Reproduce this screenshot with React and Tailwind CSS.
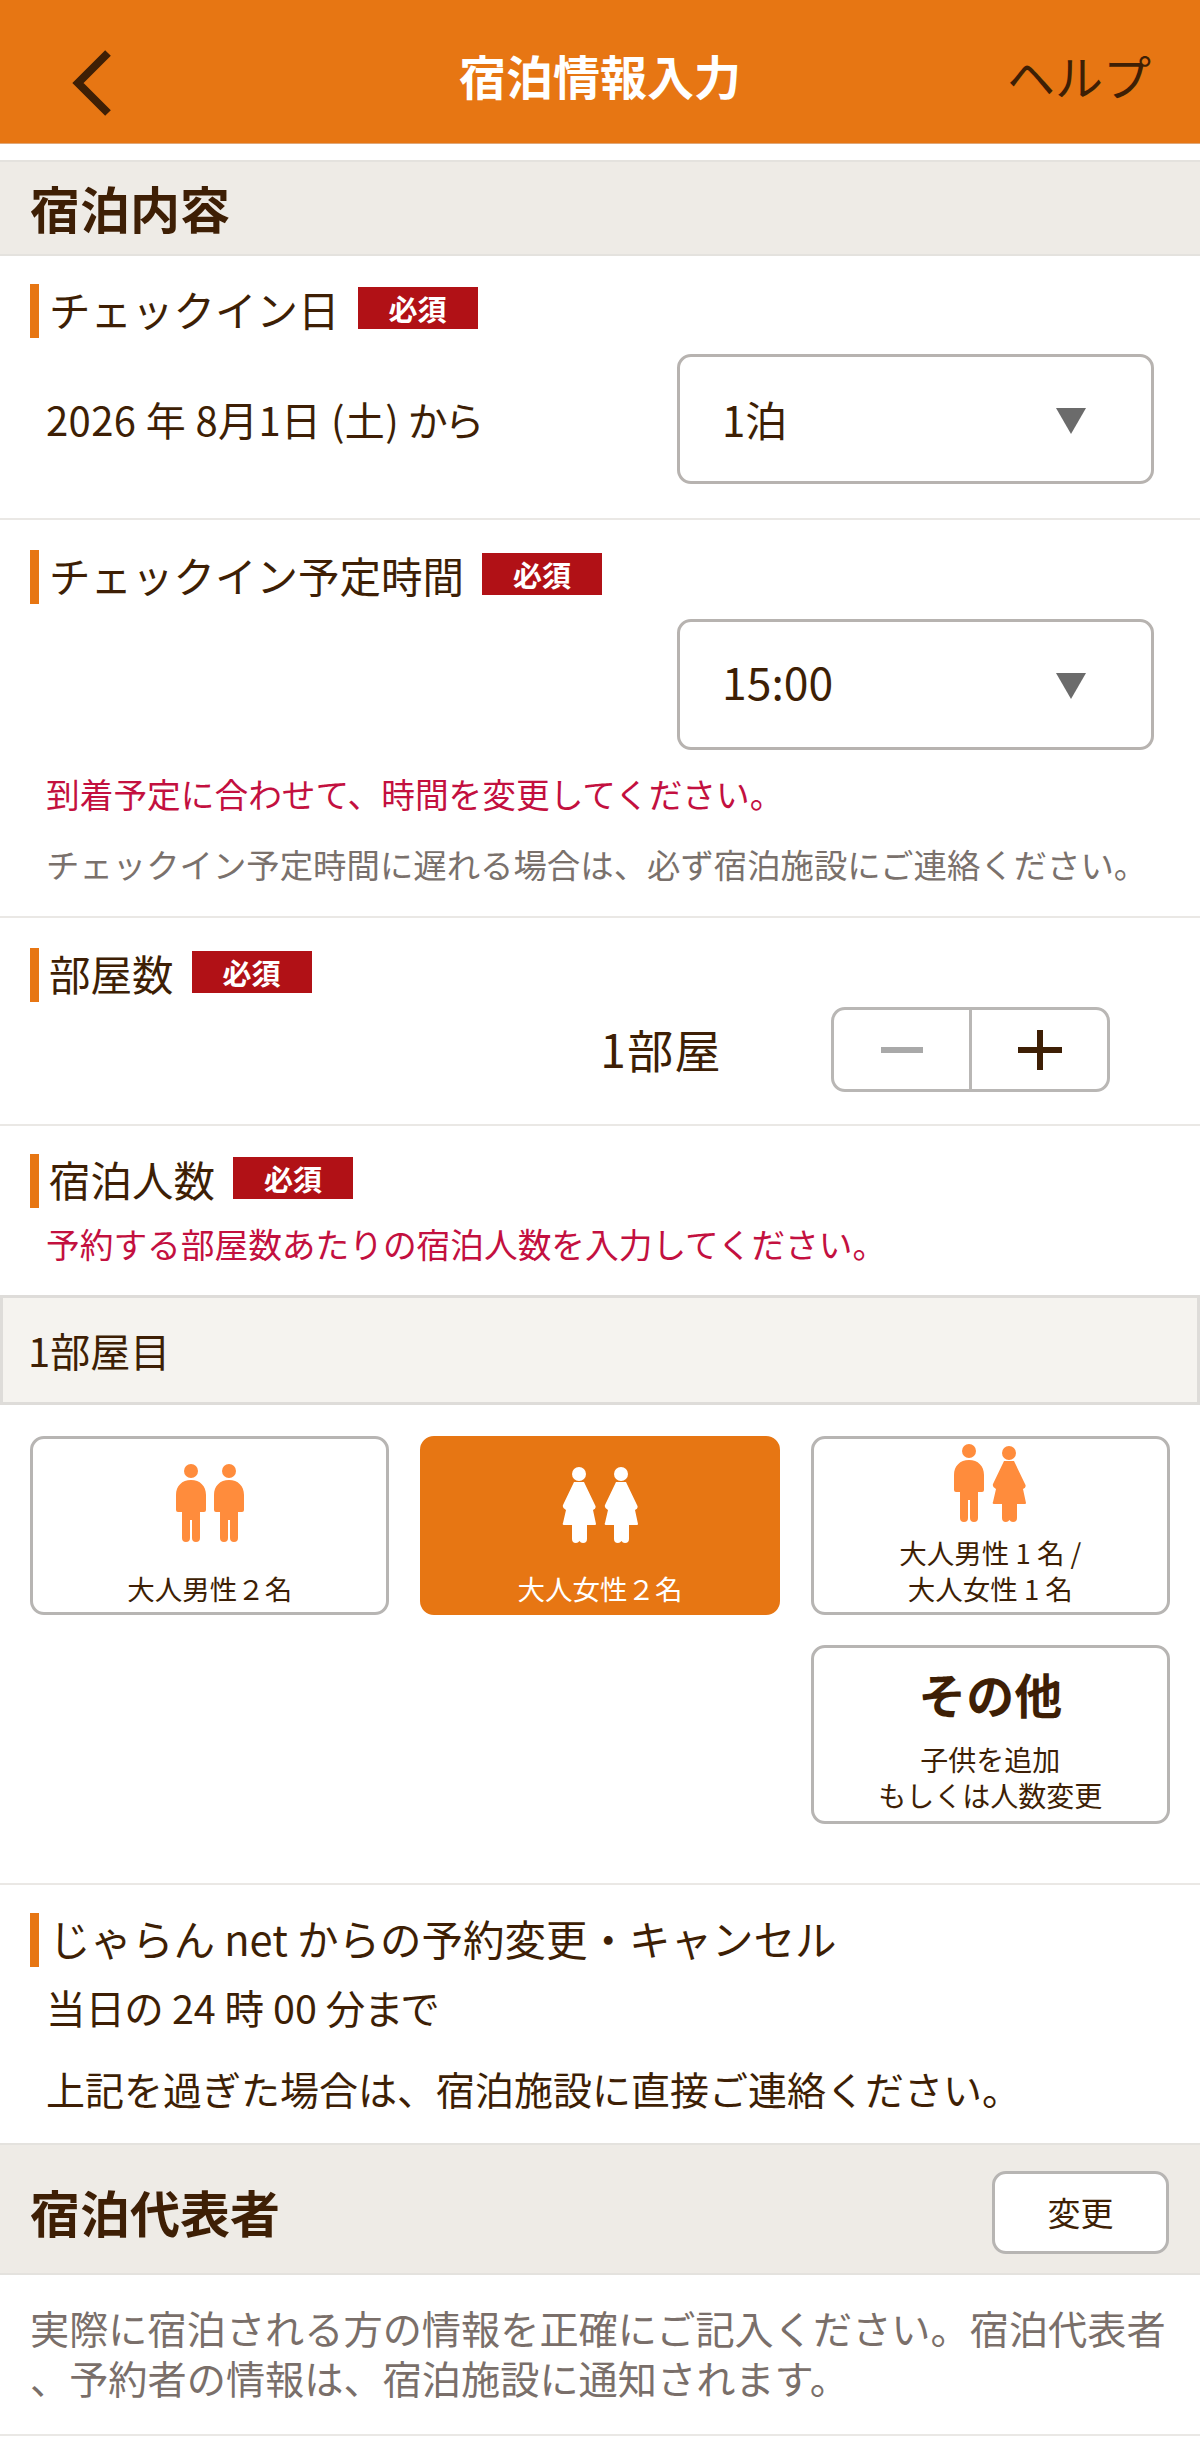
import React from "react";

const Bar = () => <span className="w-[9px] self-stretch bg-[#E77613] shrink-0" />;

function Badge() {
  return (
    <span className="ml-[18px] w-[120px] h-[42px] mt-[-6px] bg-[#B11116] text-white text-[29px] font-bold flex items-center justify-center leading-none">
      必須
    </span>
  );
}

function Label({ children, badge = true, className = "" }) {
  return (
    <div className={`flex items-center h-[54px] ml-[30px] ${className}`}>
      <Bar />
      <span className="ml-[10px] mt-[-2px] text-[41.500px] leading-none whitespace-nowrap">{children}</span>
      {badge && <Badge />}
    </div>
  );
}

function Select({ value, className = "", textClass = "" }) {
  return (
    <div className={`w-[477px] border-[3px] border-[#B7B3B0] rounded-[14px] flex items-center justify-between pl-[42px] pr-[65px] ${className}`}>
      <span className={`leading-none ${textClass}`}>{value}</span>
      <svg className="mt-[3px]" width="30" height="26" viewBox="0 0 30 26"><polygon points="0,0 30,0 15,26" fill="#6B6B6B" /></svg>
    </div>
  );
}

function SectionHead({ title, action, className = "", titleClass = "" }) {
  return (
    <div className={`bg-[#EEEBE6] border-y-2 border-[#E4E2DE] flex items-center justify-between pl-[30px] pr-[31px] ${className}`}>
      <h2 className={`text-[50px] font-bold leading-none [font-feature-settings:'palt'] ${titleClass}`}>{title}</h2>
      {action}
    </div>
  );
}

function Man({ fill }) {
  return (
    <svg width="30" height="78" viewBox="0 0 30 78" fill={fill}>
      <circle cx="15" cy="7" r="7" />
      <path d="M15 16C24 16 30 22 30 31V46Q30 48 28 48H24V74Q24 78 20 78Q16 78 16 74V56H14V74Q14 78 10 78Q6 78 6 74V48H2Q0 48 0 46V31C0 22 6 16 15 16Z" />
    </svg>
  );
}

function Woman({ fill }) {
  return (
    <svg width="34" height="76" viewBox="0 0 34 76" fill={fill}>
      <circle cx="17" cy="7" r="7" />
      <path d="M12 15H22L33 38Q35 41 31 43L34 57Q34 58 33 58H25V72Q25 76 21 76Q18.500 76 17.500 74Q16 76 14 76Q10 76 10 72V58H2Q0 58 1 56L4 43Q0 41 1 38Z" />
    </svg>
  );
}

function Choice({ active, label, figures, pt }) {
  const color = active ? "#FFFFFF" : "#FF8C3C";
  return (
    <div className={`h-[179px] rounded-[14px] border-[3px] flex flex-col items-center pb-[6px] ${active ? "bg-[#E77613] border-[#E77613] text-white" : "bg-white border-[#B7B5B3]"} ${pt}`}>
      <div className="flex gap-[8px] items-end h-[78px] shrink-0">
        {figures.map((f, i) => (f === "m" ? <Man key={i} fill={color} /> : <Woman key={i} fill={color} />))}
      </div>
      <div className="mt-auto text-[27.500px] leading-[36px] text-center">{label}</div>
    </div>
  );
}

export default function App() {
  return (
    <div className="w-full h-[2453px] overflow-hidden bg-white text-[#3E1F05] font-['Noto_Sans_CJK_JP','Noto_Sans_CJK_SC','Liberation_Sans',sans-serif]">
      <header className="h-[144px] bg-[#E77613] border-b border-[#E0A878] grid grid-cols-[1fr_auto_1fr] items-center">
        <div className="pl-[72px]">
          <svg width="40" height="66" viewBox="0 0 40 66" fill="none" className="mt-[22px]">
            <path d="M36 3L6 33L36 63" stroke="#3E1F05" strokeWidth="8" strokeLinejoin="miter" />
          </svg>
        </div>
        <h1 className="text-[47px] font-bold text-white leading-none [font-feature-settings:'palt'] mt-[6px]">宿泊情報入力</h1>
        <div className="text-right pr-[49px] text-[48px] leading-none mt-[6px]">ヘルプ</div>
      </header>

      <SectionHead title="宿泊内容" className="mt-[16px] h-[96px]" titleClass="mt-[-2px]" />

      <section className="h-[264px] border-b-2 border-[#EAE8E5] pt-[28px]">
        <Label>チェックイン日</Label>
        <div className="flex items-center justify-between pl-[46px] pr-[46px] mt-[16px]">
          <span className="text-[40px] leading-none tracking-[0.01em] [font-feature-settings:'palt'] whitespace-nowrap">2026 年 8月1日 (土) から</span>
          <Select value="1泊" className="h-[130px]" textClass="text-[42px]" />
        </div>
      </section>

      <section className="h-[398px] border-b-2 border-[#EAE8E5] pt-[30px]">
        <Label>チェックイン予定時間</Label>
        <div className="flex justify-end pr-[46px] mt-[15px]">
          <Select value="15:00" className="h-[131px]" textClass="text-[44.500px] mt-[-6px]" />
        </div>
        <p className="ml-[46px] mt-[24px] text-[33.700px] leading-[40px] text-[#C3103F] whitespace-nowrap">到着予定に合わせて、時間を変更してください。</p>
        <p className="ml-[46px] mt-[30px] text-[33.400px] leading-[40px] text-[#7A716C] whitespace-nowrap">チェックイン予定時間に遅れる場合は、必ず宿泊施設にご連絡ください。</p>
      </section>

      <section className="h-[208px] border-b-2 border-[#EAE8E5] pt-[30px]">
        <Label>部屋数</Label>
        <div className="flex items-center justify-end pr-[90px] mt-[5px]">
          <span className="text-[46px] leading-none mr-[109px] mt-[-3px] tracking-[0.03em]">1部屋</span>
          <div className="w-[279px] h-[85px] border-[3px] border-[#B9B7B5] rounded-[14px] flex">
            <div className="flex-1 flex items-center justify-center border-r-[3px] border-[#B9B7B5]">
              <span className="block w-[42px] h-[6px] bg-[#A9A9A9]" />
            </div>
            <div className="flex-1 flex items-center justify-center">
              <svg width="44" height="40" viewBox="0 0 44 40"><path d="M0 20H44M22 0V40" stroke="#3E1F05" strokeWidth="6" /></svg>
            </div>
          </div>
        </div>
      </section>

      <section className="pt-[28px]">
        <Label>宿泊人数</Label>
        <p className="ml-[46px] mt-[16px] text-[33.700px] leading-[40px] text-[#C3103F] whitespace-nowrap">予約する部屋数あたりの宿泊人数を入力してください。</p>
        <div className="mt-[31px] h-[110px] bg-[#F5F3EF] border-[3px] border-[#DEDCD9] flex items-center pl-[25px] text-[40px] leading-none">1部屋目</div>
      </section>

      <section className="h-[480px] border-b-2 border-[#EAE8E5] pt-[31px] px-[30px]">
        <div className="grid grid-cols-3 gap-x-[31px] gap-y-[30px]">
          <Choice label="大人男性２名" figures={["m", "m"]} pt="pt-[25px]" />
          <Choice active label="大人女性２名" figures={["w", "w"]} pt="pt-[26px]" />
          <Choice label={<>大人男性 1 名 /<br />大人女性 1 名</>} figures={["m", "w"]} pt="pt-[5px]" />
          <div className="col-start-3 h-[179px] rounded-[14px] border-[3px] border-[#B7B5B3] flex flex-col items-center">
            <div className="text-[48px] font-bold leading-none mt-[21px]">その他</div>
            <div className="text-[28px] leading-[36px] text-center mt-[24px]">子供を追加<br />もしくは人数変更</div>
          </div>
        </div>
      </section>

      <section className="h-[258px] pt-[28px]">
        <Label badge={false}>じゃらん net からの予約変更・キャンセル</Label>
        <p className="ml-[46px] mt-[18px] text-[39.500px] leading-[44px] [font-feature-settings:'palt'] whitespace-nowrap">当日の 24 時 00 分まで</p>
        <p className="ml-[46px] mt-[37px] text-[39px] leading-[44px] whitespace-nowrap">上記を過ぎた場合は、宿泊施設に直接ご連絡ください。</p>
      </section>

      <SectionHead
        title="宿泊代表者"
        className="h-[132px]"
        titleClass="mt-[3px]"
        action={
          <button className="w-[177px] h-[83px] mt-[6px] bg-white border-[3px] border-[#B7B5B3] rounded-[14px] text-[33px] leading-none">変更</button>
        }
      />

      <section className="h-[161px] border-b-2 border-[#EAE8E5] pt-[27px] px-[30px] text-[39.200px] leading-[50px] text-[#7A6F6A] whitespace-nowrap">
        <p>実際に宿泊される方の情報を正確にご記入ください。宿泊代表者<br />、予約者の情報は、宿泊施設に通知されます。</p>
      </section>
    </div>
  );
}
